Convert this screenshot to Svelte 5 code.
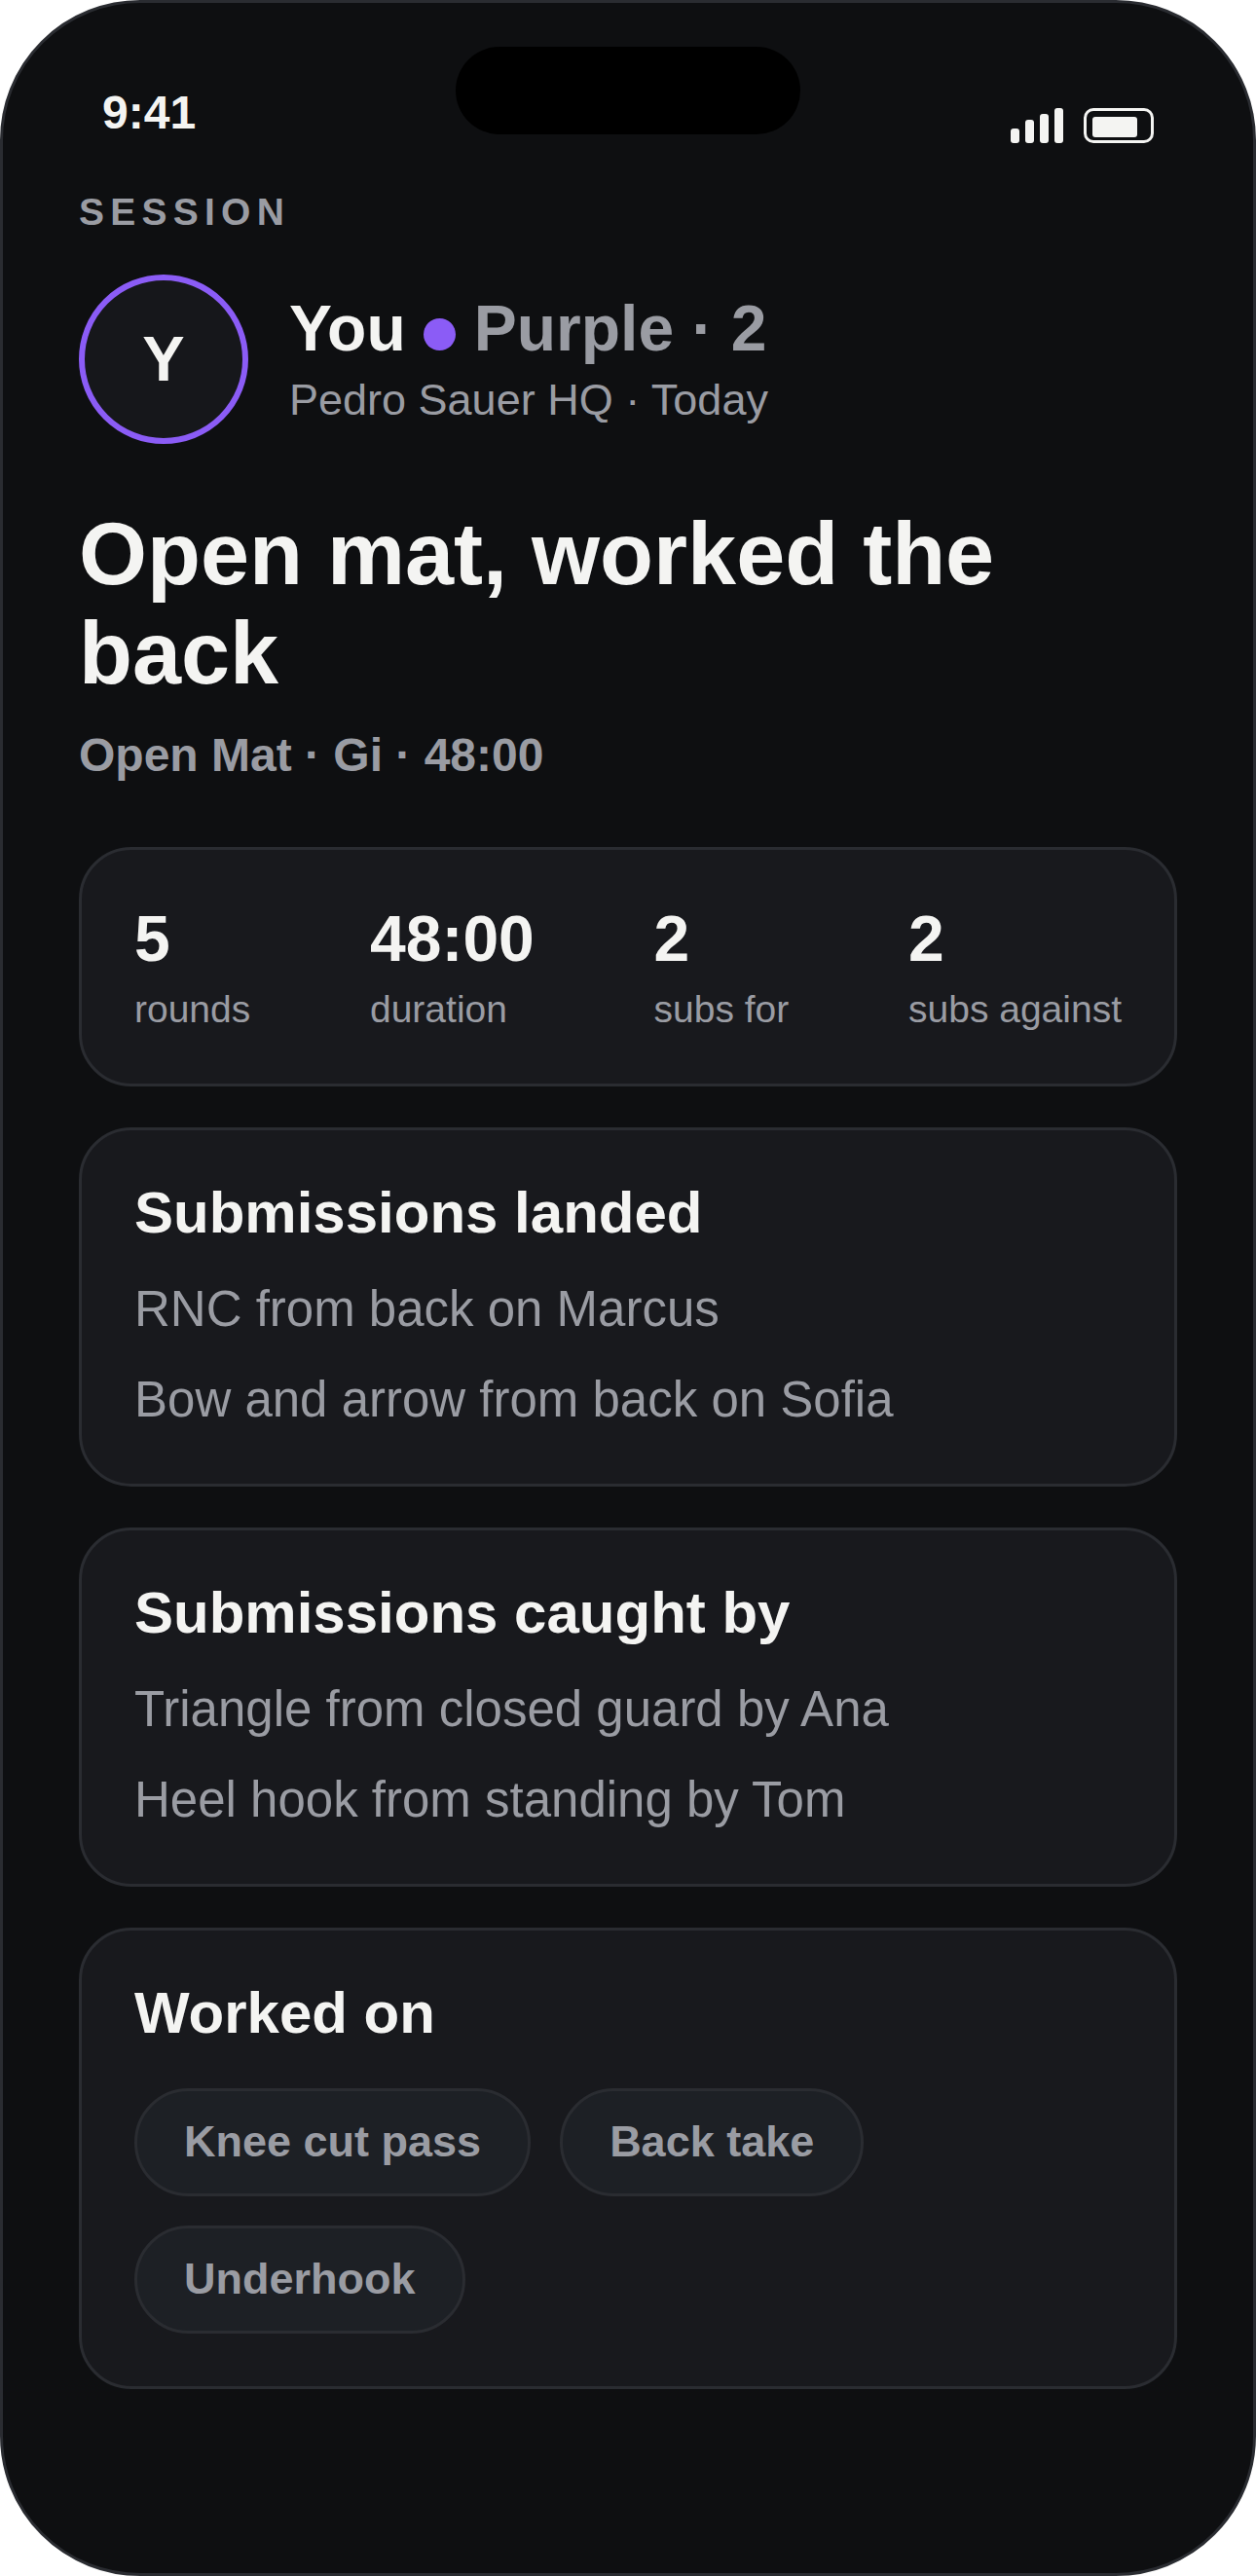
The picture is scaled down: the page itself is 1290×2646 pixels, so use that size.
<script>
  const stats = [
    { value: "5", label: "rounds" },
    { value: "48:00", label: "duration" },
    { value: "2", label: "subs for" },
    { value: "2", label: "subs against" }
  ];
  const landed = ["RNC from back on Marcus", "Bow and arrow from back on Sofia"];
  const caught = ["Triangle from closed guard by Ana", "Heel hook from standing by Tom"];
  const chips = ["Knee cut pass", "Back take", "Underhook"];
  const bars = [15, 24, 30, 36];
</script>

<div class="phone">
  <div class="island"></div>

  <div class="status">
    <span class="time">9:41</span>
    <div class="status-icons">
      <div class="signal">
        {#each bars as h}
          <i style="height: {h}px"></i>
        {/each}
      </div>
      <div class="battery"><i></i></div>
    </div>
  </div>

  <main class="content">
    <div class="eyebrow">SESSION</div>

    <div class="who">
      <div class="avatar">Y</div>
      <div class="who-text">
        <div class="name">
          <span class="you">You</span>
          <span class="dot"></span>
          <span>Purple · 2</span>
        </div>
        <div class="place">Pedro Sauer HQ · Today</div>
      </div>
    </div>

    <h1>Open mat, worked the back</h1>
    <div class="meta">Open Mat · Gi · 48:00</div>

    <section class="card stats">
      {#each stats as s}
        <div class="stat">
          <div class="value">{s.value}</div>
          <div class="label">{s.label}</div>
        </div>
      {/each}
    </section>

    <section class="card list">
      <h2>Submissions landed</h2>
      {#each landed as line}
        <p>{line}</p>
      {/each}
    </section>

    <section class="card list">
      <h2>Submissions caught by</h2>
      {#each caught as line}
        <p>{line}</p>
      {/each}
    </section>

    <section class="card">
      <h2>Worked on</h2>
      <div class="chips">
        {#each chips as c}
          <span class="chip">{c}</span>
        {/each}
      </div>
    </section>
  </main>
</div>

<style>
  :global(body) {
    background: #fff;
  }

  .phone {
    position: relative;
    box-sizing: border-box;
    width: 1290px;
    height: 2646px;
    overflow: hidden;
    border: 3px solid #2a2c31;
    border-radius: 144px;
    background: #0e0f11;
    color: #f4f4f2;
    font-family: "Liberation Sans", Arial, sans-serif;
  }

  .island {
    position: absolute;
    top: 45px;
    left: 465px;
    width: 354px;
    height: 90px;
    border-radius: 45px;
    background: #000;
  }

  .status {
    display: flex;
    justify-content: space-between;
    align-items: flex-start;
    height: 107px;
    padding: 85px 102px 0;
  }

  .time {
    margin-top: 1px;
    font-size: 48px;
    line-height: 54px;
    font-weight: 700;
  }

  .status-icons {
    display: flex;
    align-items: flex-end;
    gap: 21px;
    padding-top: 23px;
  }

  .signal {
    display: flex;
    align-items: flex-end;
    gap: 6px;
  }

  .signal i {
    display: block;
    width: 9px;
    border-radius: 3px;
    background: #f4f4f2;
  }

  .battery {
    box-sizing: border-box;
    width: 72px;
    height: 36px;
    padding: 6px 0 0 6px;
    border: 3px solid #f4f4f2;
    border-radius: 10px;
  }

  .battery i {
    display: block;
    width: 46px;
    height: 21px;
    border-radius: 3px;
    background: #f4f4f2;
  }

  .content {
    padding: 0 78px;
  }

  .eyebrow {
    font-size: 39px;
    line-height: 45px;
    font-weight: 700;
    letter-spacing: 6.24px;
    color: #9a9ca3;
  }

  .who {
    display: flex;
    align-items: center;
    gap: 42px;
    margin-top: 42px;
  }

  .avatar {
    box-sizing: border-box;
    display: flex;
    align-items: center;
    justify-content: center;
    width: 174px;
    height: 174px;
    padding-bottom: 2px;
    border: 6px solid #8b5cf6;
    border-radius: 50%;
    background: #16171b;
    font-size: 65px;
    font-weight: 700;
  }

  .name {
    display: flex;
    align-items: center;
    gap: 18px;
    font-size: 66px;
    line-height: 78px;
    font-weight: 700;
    color: #9a9ca3;
  }

  .you {
    color: #f4f4f2;
  }

  .dot {
    width: 33px;
    height: 33px;
    margin: 13px 1px 0 0;
    border-radius: 50%;
    background: #8b5cf6;
  }

  .place {
    margin: 8px 0 2px;
    font-size: 45px;
    line-height: 54px;
    color: #9a9ca3;
  }

  h1 {
    margin: 62px 0 0;
    font-size: 90px;
    line-height: 102px;
    font-weight: 700;
  }

  .meta {
    margin-top: 27px;
    font-size: 48px;
    line-height: 54px;
    font-weight: 700;
    color: #9a9ca3;
  }

  .card {
    margin-top: 42px;
    padding: 53px 54px 54px;
    border: 3px solid #2a2c31;
    border-radius: 54px;
    background: #18191d;
  }

  .card.list {
    padding-bottom: 50px;
  }

  .card.stats {
    display: flex;
    justify-content: space-between;
    margin-top: 67px;
    padding: 55px 54px 54px;
  }

  .value {
    font-size: 66px;
    line-height: 72px;
    font-weight: 700;
  }

  .label {
    margin-top: 14px;
    font-size: 39px;
    line-height: 45px;
    color: #9a9ca3;
  }

  h2 {
    margin: 0 0 32px;
    font-size: 60px;
    line-height: 63px;
    font-weight: 700;
  }

  p {
    margin: 0;
    font-size: 51px;
    line-height: 72px;
    color: #9a9ca3;
  }

  p + p {
    margin-top: 21px;
  }

  .chips {
    display: flex;
    flex-wrap: wrap;
    gap: 30px;
    margin-top: 46px;
  }

  .chip {
    box-sizing: border-box;
    display: flex;
    align-items: center;
    height: 111px;
    padding: 0 48px 2px;
    border: 3px solid #2a2c31;
    border-radius: 999px;
    background: #1d2025;
    font-size: 45px;
    font-weight: 700;
    color: #9a9ca3;
  }
</style>
